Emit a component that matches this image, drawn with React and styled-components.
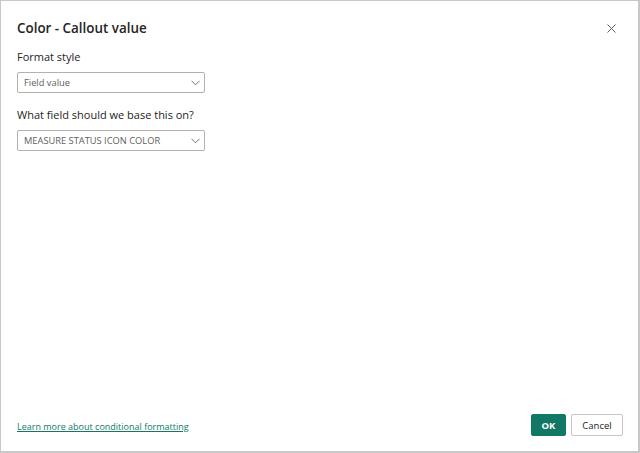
import styled, { createGlobalStyle } from "styled-components";

const GlobalStyle = createGlobalStyle`
    html, body {
        margin: 0;
        padding: 0;
        background: #ffffff;
    }
    body {
        font-family: "Open Sans", "Noto Sans", Arial, sans-serif;
        color: #252423;
    }
`

const Dialog = styled.div`
    box-sizing: border-box;
    width: 640px;
    height: 453px;
    border: 1px solid #c8c8c8;
    border-right-width: 2px;
    border-bottom-width: 2px;
    background: #fff;
    display: flex;
    flex-direction: column;
    padding: 15px 15px 15px 16px;
`

const Header = styled.div`
    display: flex;
    align-items: center;
    justify-content: space-between;
    height: 24px;
`

const Title = styled.h1`
    margin: 0;
    font-size: 13.4px;
    font-weight: 600;
    color: #252423;
`

const CloseButton = styled.button`
    border: none;
    background: none;
    padding: 0;
    margin-right: 5px;
    width: 14px;
    height: 14px;
    display: flex;
    align-items: center;
    justify-content: center;
    cursor: pointer;
`

const Body = styled.div`
    flex: 1;
    display: flex;
    flex-direction: column;
    padding-top: 9px;
`

const Field = styled.div`
    display: flex;
    flex-direction: column;
    margin-bottom: 14px;
`

const Label = styled.label`
    font-size: 11px;
    color: #252423;
    margin-bottom: 8px;
`

const Select = styled.div`
    box-sizing: border-box;
    width: 188px;
    height: 21px;
    border: 1px solid #b3b0ad;
    border-radius: 2px;
    display: flex;
    align-items: center;
    justify-content: space-between;
    padding: 0 4px 0 6px;
    font-size: 9.3px;
    color: #605e5c;
`

const Footer = styled.div`
    display: flex;
    align-items: center;
    justify-content: space-between;
    height: 22px;
`

const HelpLink = styled.a`
    font-size: 9px;
    color: #117865;
    text-decoration: underline;
    margin-top: 3px;
`

const Buttons = styled.div`
    display: flex;
    gap: 5px;
`

const Button = styled.button`
    box-sizing: border-box;
    height: 22px;
    min-width: ${props => props.$width || "35px"};
    padding: 0 8px;
    border-radius: 2px;
    font-family: inherit;
    font-size: 9.5px;
    font-weight: ${props => props.$primary ? 700 : 400};
    color: ${props => props.$primary ? "#fff" : "#252423"};
    background: ${props => props.$primary ? "#117865" : "#fff"};
    border: 1px solid ${props => props.$primary ? "#117865" : "#c8c6c4"};
    cursor: pointer;
`

function Chevron(){
    return (
        <svg width="9" height="6" viewBox="0 0 9 6">
            <path d="M0.5 0.8 L4.5 4.8 L8.5 0.8" fill="none" stroke="#605e5c" strokeWidth="0.9"/>
        </svg>
    );
}

export default function App(){
    return (
        <>
            <GlobalStyle/>
            <Dialog>
                <Header>
                    <Title>Color - Callout value</Title>
                    <CloseButton aria-label="Close">
                        <svg width="9" height="9" viewBox="0 0 9 9">
                            <path d="M0.5 0.5 L8.5 8.5 M8.5 0.5 L0.5 8.5" stroke="#605e5c" strokeWidth="1"/>
                        </svg>
                    </CloseButton>
                </Header>
                <Body>
                    <Field>
                        <Label>Format style</Label>
                        <Select>
                            <span>Field value</span>
                            <Chevron/>
                        </Select>
                    </Field>
                    <Field>
                        <Label>What field should we base this on?</Label>
                        <Select>
                            <span>MEASURE STATUS ICON COLOR</span>
                            <Chevron/>
                        </Select>
                    </Field>
                </Body>
                <Footer>
                    <HelpLink href="#">Learn more about conditional formatting</HelpLink>
                    <Buttons>
                        <Button $primary>OK</Button>
                        <Button $width="52px">Cancel</Button>
                    </Buttons>
                </Footer>
            </Dialog>
        </>
    );
}
